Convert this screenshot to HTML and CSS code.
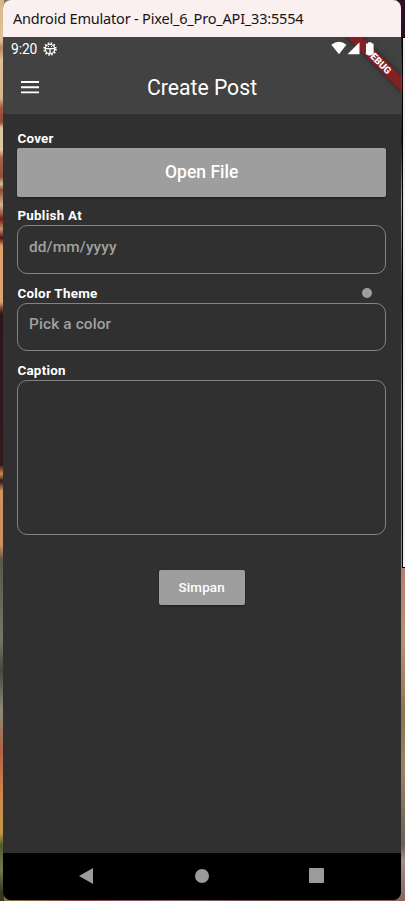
FILE: index.html
```html
<!DOCTYPE html>
<html lang="id">
<head>
<meta charset="utf-8">
<title>Create Post</title>
<link rel="stylesheet" href="styles.css">
</head>
<body>
<div class="desktop">
  <div class="behind-window"></div>
  <main class="emulator">
    <header class="titlebar"><span class="window-title">Android Emulator - Pixel_6_Pro_API_33:5554</span></header>
    <div class="top">
      <div class="statusbar">
        <span class="clock">9:20</span>
        <svg class="bug" viewBox="0 0 14 14" width="14" height="14">
          <circle cx="7" cy="7" r="5.9" fill="none" stroke="#fff" stroke-width="1.7" stroke-dasharray="1.5 1.59"/>
          <circle cx="7" cy="7" r="4.7" fill="none" stroke="#fff" stroke-width="1.3"/>
          <path d="M2.5 6.6h9M7 7v5" fill="none" stroke="#fff" stroke-width="1.3"/>
          <path d="M5 4.6h1M8 4.6h1" stroke="#fff" stroke-width="1"/>
        </svg>
      </div>
      <div class="appbar">
        <svg class="menu" viewBox="0 0 18 13" width="18" height="13"><path d="M0 1h18M0 6.2h18M0 11.4h18" stroke="#fff" stroke-width="1.9"/></svg>
        <h1>Create Post</h1>
      </div>
      <div class="banner-area">
        <div class="banner">DEBUG</div>
        <svg class="signals" viewBox="0 0 70 20" width="70" height="20" fill="#fff">
          <path d="M.3 7.8Q8 1.6 15.4 7.8L8 17.3z"/>
          <path d="M28.5 5.3v12h-12z"/>
          <path d="M35 6.6h2V5.2h3.6v1.4h2v10.8H35z"/>
        </svg>
      </div>
    </div>
    <form class="content">
      <section class="field"><label>Cover</label><button type="button" class="open-file">Open File</button></section>
      <section class="field"><label>Publish At</label><div class="input">dd/mm/yyyy</div></section>
      <section class="field"><div class="label-row"><label>Color Theme</label><span class="swatch"></span></div><div class="input">Pick a color</div></section>
      <section class="field"><label>Caption</label><div class="input caption"></div></section>
      <button type="button" class="save">Simpan</button>
    </form>
    <nav class="navbar">
      <svg viewBox="0 0 14 16" width="14" height="16"><path d="M14 0v16L0 8z" fill="#9b9b9b"/></svg>
      <svg viewBox="0 0 14 14" width="14" height="14"><circle cx="7" cy="7" r="7" fill="#9b9b9b"/></svg>
      <svg viewBox="0 0 15 15" width="15" height="15"><rect width="15" height="15" rx="1" fill="#9b9b9b"/></svg>
    </nav>
  </main>
</div>
</body>
</html>
```
FILE: styles.css
```css
* { box-sizing: border-box; }
body { margin: 0; font-family: Roboto, sans-serif; color: #fff; }
.desktop {
  position: relative;
  width: 405px;
  height: 901px;
  padding: 0 4px 1px 3px;
  overflow: hidden;
  background:
    linear-gradient(#d9b688 0, #dfc29a 40px, #b98563 48px, #dcc098 60px, #d8b58a 98px, #a2573f 108px, #8f4b3b 122px, #dcc9a0 128px, #ddc9a0 150px, #a8604a 158px, #94513c 177px, #d2bd9a 184px, #8a4a38 190px, #d6b78d 205px, #6e2019 219px, #c4926b 229px, #4d1315 238px, #dda26c 246px, #dba46c 302px, #6d4030 309px, #2d151a 314px, #36191d 465px, #cb8a50 474px, #2b1b1b 481px, #d39360 491px, #cf9060 545px, #5a564b 560px, #77766a 640px, #474640 670px, #8b8b7c 710px, #b06345 750px, #d08a50 800px, #c39845 833px, #4f5b2d 845px, #6f7b50 870px, #39351f 892px) left / 4px 100% no-repeat,
    linear-gradient(#330d26 0, #2b0d22 37px, #6f4a44 80px, #221418 140px, #b49a90 200px, #3b2323 300px, #b08a72 430px, #a6604f 500px, #b47f6c 567px, #b98e75 640px, #8d7350 715px, #9a8163 770px, #6b5f54 845px, #a48b83 860px, #8a6562 900px) right / 8px 100% no-repeat,
    linear-gradient(90deg, #7d7a45, #8e4649 20%, #79616a 45%, #704b42 70%, #8c675c);
}
.behind-window {
  position: absolute;
  left: 402px;
  top: 37px;
  width: 10px;
  height: 531px;
  border: 1px solid #000;
  background: #f0eff3;
}
.emulator {
  position: relative;
  display: flex;
  flex-direction: column;
  width: 398px;
  height: 900px;
  overflow: hidden;
  border-radius: 8px;
  background: #303030;
}
.titlebar {
  display: flex;
  align-items: center;
  flex: 0 0 37px;
  padding: 0 0 2px 10px;
  background: #f9f0ef;
  color: #171415;
}
.window-title { font: 14.5px/20px "Noto Sans", sans-serif; letter-spacing: -0.19px; white-space: nowrap; }
.top {
  position: relative;
  flex: 0 0 77px;
  background: #424242;
}
.statusbar { display: flex; align-items: center; gap: 6px; height: 24px; padding-left: 8px; }
.clock { font-size: 13.8px; line-height: 24px; letter-spacing: -.1px; }
.appbar { display: grid; grid-template-columns: 54px 290px 54px; align-items: center; height: 53px; }
.menu { margin-left: 18px; }
.appbar h1 { margin: 0; font-size: 21.2px; line-height: 28px; font-weight: 400; text-align: center; }
.banner-area { position: absolute; top: 0; right: 0; width: 70px; height: 70px; overflow: hidden; }
.banner {
  position: absolute;
  left: -3px;
  top: 18px;
  width: 100px;
  height: 11px;
  transform: rotate(45deg);
  background: #832023;
  box-shadow: 0 0 5px rgba(0, 0, 0, .5);
  font-size: 9.8px;
  line-height: 11px;
  font-weight: 900;
  text-align: center;
  text-indent: 2px;
}
.signals { position: absolute; left: 0; top: 0; }
.content { display: flex; flex-direction: column; flex: 1; padding: 16px 15px 0 14.4px; }
.field { display: flex; flex-direction: column; margin-bottom: 10.9px; }
label { font-size: 13.4px; line-height: 17.4px; height: 18px; font-weight: 700; letter-spacing: .27px; }
.label-row { display: flex; align-items: center; justify-content: space-between; height: 18px; padding-right: 14px; }
.swatch { width: 10px; height: 10px; margin-bottom: 1px; border-radius: 50%; background: #9e9e9e; }
button {
  border: 0;
  border-radius: 2px;
  padding: 0;
  font-family: Roboto, sans-serif;
  font-weight: 500;
  color: #fff;
  background: #9e9e9e;
  box-shadow: 0 1px 2px rgba(0, 0, 0, .4);
}
.open-file { height: 48.5px; font-size: 17.5px; }
.input {
  height: 48.4px;
  padding: 10.7px 10.6px;
  border: 1px solid #838383;
  border-radius: 10px;
  color: #a0a0a0;
  font-size: 15.4px;
  line-height: 20px;
  font-weight: 500;
  letter-spacing: .13px;
}
.caption { height: 155px; }
.save { align-self: center; width: 86px; height: 35px; margin-top: 24.6px; font-size: 13.4px; letter-spacing: .15px; }
.navbar {
  display: grid;
  grid-template-columns: 116px 114px 15px;
  flex: 0 0 47px;
  align-items: center;
  padding: 0 0 2px 76px;
  background: #000;
}
```
